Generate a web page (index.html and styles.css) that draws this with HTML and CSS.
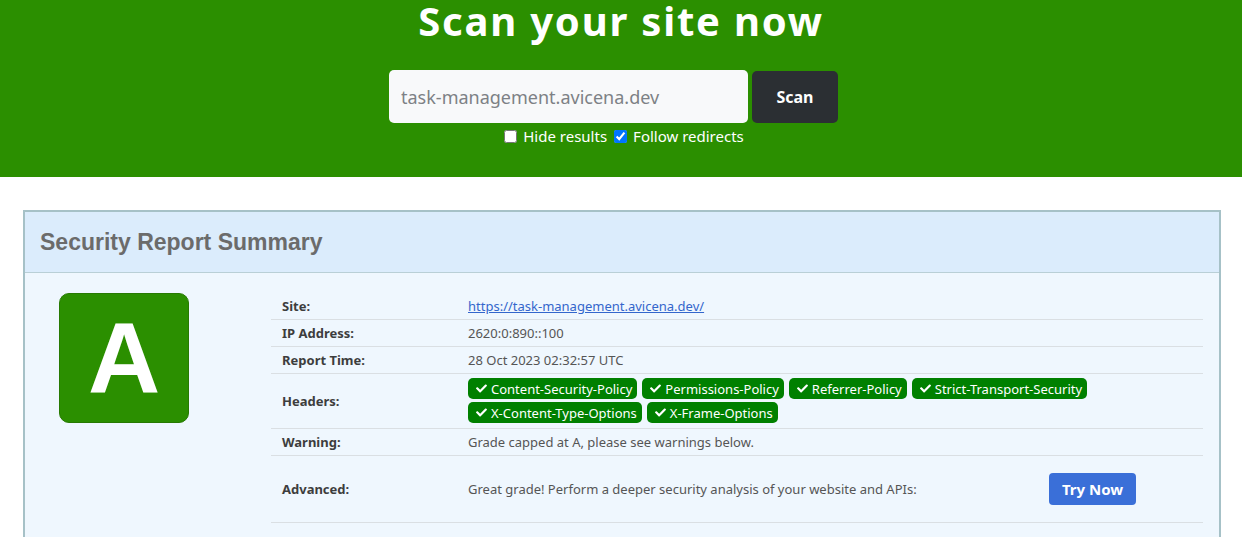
FILE: index.html
```html
<!DOCTYPE html>
<html lang="en">
<head>
<meta charset="utf-8">
<title>Scan your site now</title>
<link rel="stylesheet" href="styles.css">
</head>
<body>
<header class="hero">
  <h1 class="hero-title">Scan your site now</h1>
  <form class="scan-form">
    <div class="scan-row">
      <input class="scan-input" type="text" placeholder="task-management.avicena.dev">
      <button class="scan-btn" type="button">Scan</button>
    </div>
    <div class="scan-options">
      <label class="opt"><input type="checkbox"> Hide results</label>
      <label class="opt"><input type="checkbox" checked> Follow redirects</label>
    </div>
  </form>
</header>

<section class="card">
  <div class="card-head">
    <h2 class="card-title">Security Report Summary</h2>
  </div>
  <div class="card-body">
    <div class="grade-col">
      <div class="grade">A</div>
    </div>
    <table class="report">
      <tbody>
        <tr><th>Site:</th><td><a class="site-link" href="#">https://task-management.avicena.dev/</a></td></tr>
        <tr><th>IP Address:</th><td>2620:0:890::100</td></tr>
        <tr><th>Report Time:</th><td>28 Oct 2023 02:32:57 UTC</td></tr>
        <tr class="headers-row"><th>Headers:</th><td>
          <div class="badges">
            <span class="badge"><svg class="tick" viewBox="0 0 512 512"><path d="M173.9 439.4l-166.4-166.4c-10-10-10-26.2 0-36.2l36.2-36.2c10-10 26.2-10 36.2 0L192 312.7 432.1 72.6c10-10 26.2-10 36.2 0l36.2 36.2c10 10 10 26.2 0 36.2l-294.4 294.4c-10 10-26.2 10-36.2 0z"/></svg>Content-Security-Policy</span>
            <span class="badge"><svg class="tick" viewBox="0 0 512 512"><path d="M173.9 439.4l-166.4-166.4c-10-10-10-26.2 0-36.2l36.2-36.2c10-10 26.2-10 36.2 0L192 312.7 432.1 72.6c10-10 26.2-10 36.2 0l36.2 36.2c10 10 10 26.2 0 36.2l-294.4 294.4c-10 10-26.2 10-36.2 0z"/></svg>Permissions-Policy</span>
            <span class="badge"><svg class="tick" viewBox="0 0 512 512"><path d="M173.9 439.4l-166.4-166.4c-10-10-10-26.2 0-36.2l36.2-36.2c10-10 26.2-10 36.2 0L192 312.7 432.1 72.6c10-10 26.2-10 36.2 0l36.2 36.2c10 10 10 26.2 0 36.2l-294.4 294.4c-10 10-26.2 10-36.2 0z"/></svg>Referrer-Policy</span>
            <span class="badge"><svg class="tick" viewBox="0 0 512 512"><path d="M173.9 439.4l-166.4-166.4c-10-10-10-26.2 0-36.2l36.2-36.2c10-10 26.2-10 36.2 0L192 312.7 432.1 72.6c10-10 26.2-10 36.2 0l36.2 36.2c10 10 10 26.2 0 36.2l-294.4 294.4c-10 10-26.2 10-36.2 0z"/></svg>Strict-Transport-Security</span>
            <span class="badge"><svg class="tick" viewBox="0 0 512 512"><path d="M173.9 439.4l-166.4-166.4c-10-10-10-26.2 0-36.2l36.2-36.2c10-10 26.2-10 36.2 0L192 312.7 432.1 72.6c10-10 26.2-10 36.2 0l36.2 36.2c10 10 10 26.2 0 36.2l-294.4 294.4c-10 10-26.2 10-36.2 0z"/></svg>X-Content-Type-Options</span>
            <span class="badge"><svg class="tick" viewBox="0 0 512 512"><path d="M173.9 439.4l-166.4-166.4c-10-10-10-26.2 0-36.2l36.2-36.2c10-10 26.2-10 36.2 0L192 312.7 432.1 72.6c10-10 26.2-10 36.2 0l36.2 36.2c10 10 10 26.2 0 36.2l-294.4 294.4c-10 10-26.2 10-36.2 0z"/></svg>X-Frame-Options</span>
          </div>
        </td></tr>
        <tr><th>Warning:</th><td>Grade capped at A, please see warnings below.</td></tr>
        <tr class="adv-row"><th>Advanced:</th><td>
          <div class="adv">
            <span class="adv-text">Great grade! Perform a deeper security analysis of your website and APIs:</span>
            <button class="try-btn" type="button">Try Now</button>
          </div>
        </td></tr>
      </tbody>
    </table>
  </div>
</section>
</body>
</html>
```

FILE: styles.css
```css
* { box-sizing: border-box; }
html, body { margin: 0; padding: 0; }
body {
  font-family: "Noto Sans", "DejaVu Sans", sans-serif;
  background: #ffffff;
  color: #333;
}

.hero {
  background: #2b8f00;
  padding: 0 0 31px;
  text-align: center;
}
.hero-title {
  margin: 0;
  padding-top: 1px;
  color: #fff;
  font-size: 40px;
  line-height: 40px;
  font-weight: 700;
  letter-spacing: 1.8px;
}
.scan-form {
  margin-top: 29px;
}
.scan-row {
  display: flex;
  justify-content: center;
  align-items: center;
  gap: 4px;
  padding-right: 15px;
}
.scan-input {
  width: 359px;
  height: 53px;
  border: none;
  border-radius: 5px;
  background: #f8f9fa;
  padding: 0 12px;
  font-family: "Noto Sans", sans-serif;
  font-size: 18px;
  color: #333;
  outline: none;
}
.scan-input::placeholder { color: #7d8185; }
.scan-btn {
  width: 86px;
  height: 52px;
  margin-top: 1px;
  border: none;
  border-radius: 5px;
  background: #2b2f33;
  color: #fff;
  font-family: "Noto Sans", sans-serif;
  font-weight: 700;
  font-size: 16px;
}
.scan-options {
  margin-top: 3px;
  display: flex;
  justify-content: center;
  gap: 7px;
  color: #fff;
  font-size: 15px;
  line-height: 20px;
  padding-left: 6px;
}
.opt { display: inline-flex; align-items: center; }
.opt input { margin: 0 6px 0 0; width: 13px; height: 13px; }

.card {
  margin: 33px 21px 0 23px;
  border: 2px solid #a6c1c7;
  background: #eff7fe;
  min-height: 400px;
}
.card-head {
  background: #dbecfc;
  border-bottom: 1px solid #b9cfd6;
  height: 61px;
  padding: 0 15px;
  display: flex;
  align-items: center;
}
.card-title {
  margin: 0;
  font-family: "Liberation Sans", Arial, sans-serif;
  font-weight: 700;
  font-size: 23px;
  color: #6b6b6b;
  padding-top: 1px;
}
.card-body {
  display: flex;
  padding: 20px 16px 0 34px;
}
.grade-col {
  width: 212px;
  flex: none;
}
.grade {
  width: 130px;
  height: 130px;
  background: #2b8f00;
  border: 1px solid #277a02;
  border-radius: 10px;
  color: #fff;
  font-family: "Liberation Sans", Arial, sans-serif;
  font-weight: 700;
  font-size: 100px;
  line-height: 128px;
  text-align: center;
}

.report {
  flex: 1;
  border-collapse: collapse;
  font-size: 13px;
  line-height: 16px;
}
.report th, .report td {
  padding: 5px 11px;
  border-bottom: 1px solid #dadfe3;
  text-align: left;
  vertical-align: middle;
}
.report th {
  width: 186px;
  font-weight: 700;
  color: #3d3d3d;
}
.report td { color: #555; }
.site-link { color: #3366cc; }

.headers-row td { padding: 4px 11px 5px; }
.badges {
  display: flex;
  flex-wrap: wrap;
  gap: 3px 5px;
}
.badge {
  display: inline-flex;
  align-items: center;
  height: 21px;
  padding: 0 5px 0 8px;
  background: #008000;
  color: #fff;
  border-radius: 5px;
  font-size: 13px;
}
.tick {
  width: 11px;
  height: 11px;
  margin-right: 4px;
  fill: #fff;
}

.adv-row th, .adv-row td { padding-top: 17px; padding-bottom: 17px; }
.adv {
  display: flex;
  align-items: center;
}
.adv-text { width: 581px; }
.try-btn {
  width: 87px;
  height: 32px;
  border: none;
  border-radius: 4px;
  background: #3a6fd8;
  color: #fff;
  font-family: "Noto Sans", sans-serif;
  font-weight: 700;
  font-size: 15px;
}
```
